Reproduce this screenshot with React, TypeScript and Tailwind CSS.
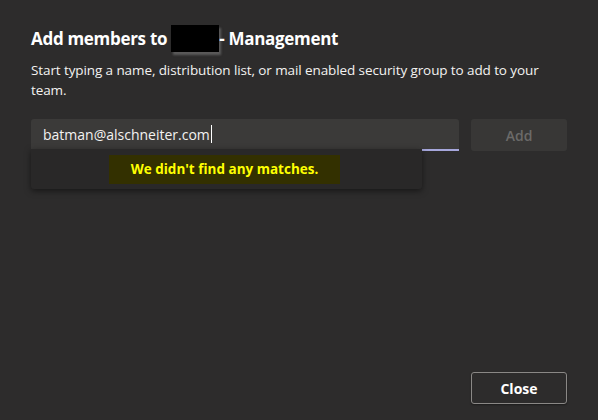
import React from "react";

export default function App() {
  return (
    <div
      className="w-[598px] h-[420px] bg-[#2d2c2c] flex flex-col px-[31px] pt-[25px] pb-[16px] text-white"
      style={{ fontFamily: '"Open Sans", "Noto Sans", sans-serif' }}
    >
      <h1 className="flex items-center text-[17px] font-bold leading-[24px] tracking-[-0.3px]">
        <span>Add members to</span>
        <span className="ml-[4px] inline-block w-[48px] h-[27px] bg-black shadow-[2px_3px_2px_rgba(120,120,120,0.6)]" />
        <span>- Management</span>
      </h1>
      <p className="mt-[8px] text-[13.5px] leading-[20px] text-[#f3f2f1] tracking-[-0.1px]">
        Start typing a name, distribution list, or mail enabled security group to add to your team.
      </p>
      <div className="mt-[19px] flex gap-[12px]">
        <div className="relative w-[428px]">
          <div className="h-[32px] bg-[#3b3a39] rounded-t-[3px] border-b-2 border-[#a6a7dc] flex items-center px-[12px] text-[14px] text-[#f3f2f1]">
            <span>batman@alschneiter.com</span>
            <span className="inline-block w-[1px] h-[18px] bg-white ml-[1px]" />
          </div>
          <div className="absolute left-0 top-[30px] w-[391px] h-[40px] bg-[#292828] rounded-b-[3px] shadow-[0_2px_6px_rgba(0,0,0,0.5)] pl-[78px] pt-[6px]">
            <div className="w-[231px] h-[29px] bg-[#333000] flex items-center justify-center text-[#ffff00] text-[13.5px] font-bold">
              We didn't find any matches.
            </div>
          </div>
        </div>
        <button className="w-[96px] h-[32px] bg-[#383736] rounded-[3px] text-[14px] text-[#6b6a69] font-semibold">
          Add
        </button>
      </div>
      <div className="flex-1" />
      <div className="flex justify-end">
        <button className="w-[96px] h-[32px] border border-[#8a8886] rounded-[3px] text-[14px] font-bold text-white bg-[#2d2c2c] shadow-[0_1px_2px_rgba(0,0,0,0.4)]">
          Close
        </button>
      </div>
    </div>
  );
}
